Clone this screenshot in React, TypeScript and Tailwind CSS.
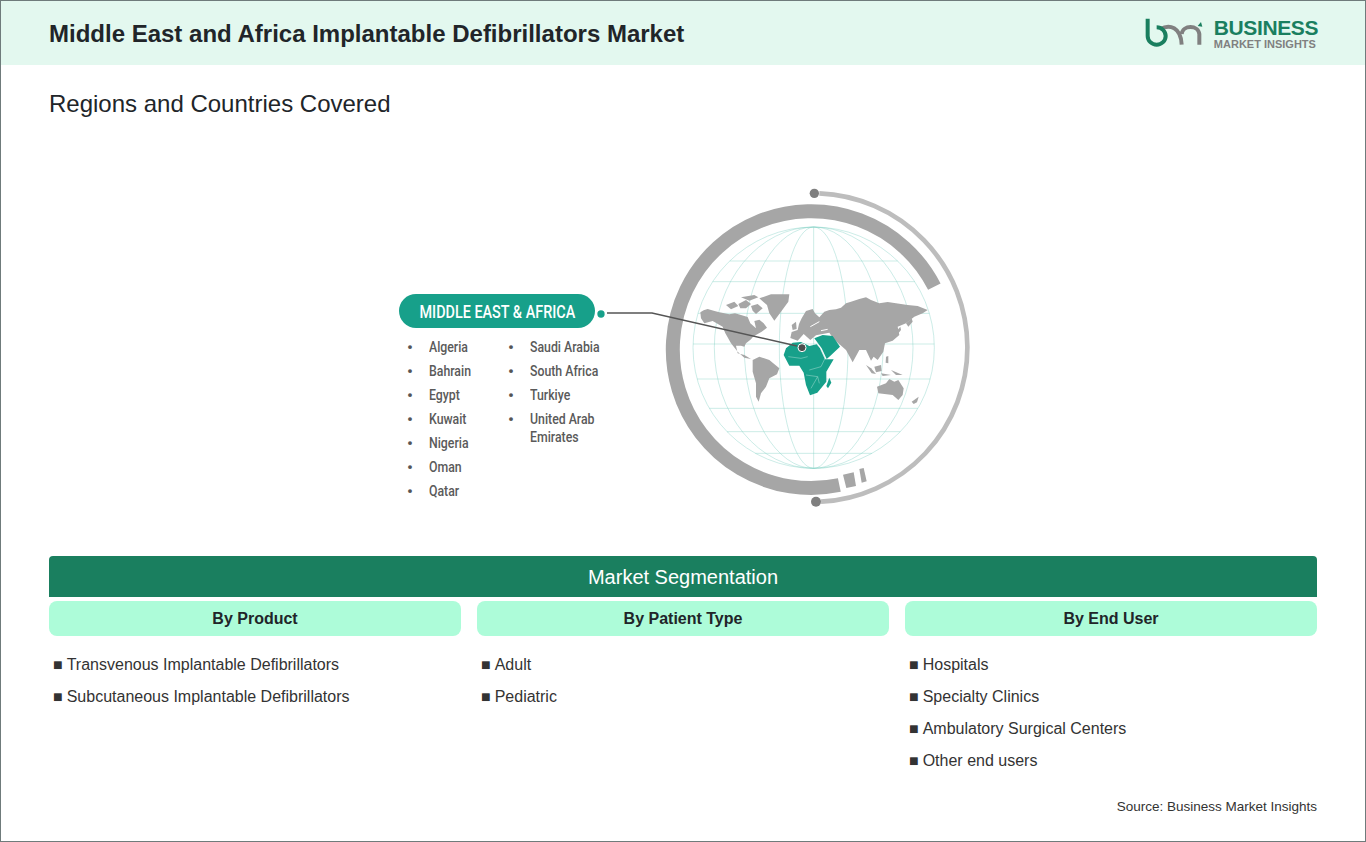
import React from 'react';

const meridians = [362, 298, 208, 103];
const parallels = [243, 305, 400, 492, 597, 685, 755, 820];
const leftCountries = ['Algeria', 'Bahrain', 'Egypt', 'Kuwait', 'Nigeria', 'Oman', 'Qatar'];
const rightCountries = ['Saudi Arabia', 'South Africa', 'Turkiye', 'United Arab\nEmirates'];

const segments = [
  { title: 'By Product', items: ['Transvenous Implantable Defibrillators', 'Subcutaneous Implantable Defibrillators'] },
  { title: 'By Patient Type', items: ['Adult', 'Pediatric'] },
  { title: 'By End User', items: ['Hospitals', 'Specialty Clinics', 'Ambulatory Surgical Centers', 'Other end users'] },
];

const greyLand = [
  // north america
  'M148,397 L158,391 L170,387 L188,392 L205,397 L235,403 L252,400 L270,405 L290,411 L298,430 L315,445 L310,423 L325,419 L338,430 L348,443 L332,455 L315,465 L306,470 L300,478 L285,490 L280,500 L270,497 L255,497 L260,520 L280,525 L300,537 L280,533 L260,515 L240,490 L223,460 L215,440 L185,423 L160,430 L150,415 Z',
  // arctic islands
  'M225,375 L250,365 L262,378 L240,388 Z',
  'M262,372 L285,360 L300,372 L285,385 L268,385 Z',
  'M270,352 L310,345 L322,352 L295,362 Z',
  'M300,378 L320,372 L335,385 L315,402 L305,392 Z',
  // greenland
  'M325,355 L360,343 L415,343 L412,365 L390,395 L370,422 L355,400 L348,375 Z',
  // south america
  'M305,540 L325,530 L355,540 L385,565 L378,583 L355,595 L345,620 L330,640 L323,665 L315,650 L315,610 L305,575 Z',
  // eurasia
  'M418,474 L422,456 L440,450 L444,432 L452,415 L465,393 L485,387 L492,400 L505,412 L520,395 L535,390 L555,388 L570,383 L585,370 L600,365 L625,357 L645,352 L660,360 L685,370 L710,366 L735,370 L770,375 L800,378 L830,390 L815,400 L790,410 L765,430 L740,440 L745,465 L725,482 L702,490 L697,515 L680,540 L668,530 L660,542 L645,510 L625,510 L605,547 L585,510 L568,495 L548,478 L535,458 L495,466 L478,480 L458,462 L440,482 Z',
  // uk, japan, kamchatka
  'M422,435 L435,425 L437,447 L425,450 Z',
  'M735,455 L748,440 L750,450 L738,465 Z',
  'M765,430 L782,415 L785,425 L772,440 Z',
  // philippines and indonesia
  'M705,530 L712,528 L712,550 L704,548 Z',
  'M645,555 L660,565 L675,582 L662,580 Z',
  'M670,560 L690,555 L692,573 L675,577 Z',
  'M720,570 L755,585 L735,585 Z',
  'M690,580 L720,585 L695,588 Z',
  // australia
  'M678,620 L705,610 L715,597 L730,605 L742,600 L758,625 L755,645 L742,660 L725,645 L682,640 Z',
  'M782,665 L803,650 L798,667 L788,672 Z',
];

const tealLand = [
  // africa
  'M398,525 L405,505 L425,488 L450,486 L475,498 L497,493 L507,505 L522,538 L548,538 L526,575 L526,605 L499,638 L477,646 L465,615 L458,578 L445,557 L415,557 Z',
  // arabia
  'M490,475 L515,465 L545,468 L567,500 L535,530 L527,537 L512,505 Z',
  // madagascar
  'M535,593 L541,608 L531,625 L526,618 Z',
];

const GlobeFigure = () => (
  <svg viewBox="0 0 990 990" className="w-[330px] h-[330px] overflow-visible shrink-0">
    <path d="M850,320 A415,415 0 1 0 565,915" fill="none" stroke="#a6a6a6" strokeWidth="42" />
    <path d="M586,924 L576,884 L608,877 L615,918 Z" fill="#a6a6a6" />
    <path d="M632,908 L625,867 L638,864 L647,904 Z" fill="#a6a6a6" />
    <path d="M505,40 A463,463 0 0 1 510,965" fill="none" stroke="#bdbdbd" strokeWidth="14" />
    <circle cx="490" cy="40" r="14" fill="#7f7f7f" />
    <circle cx="495" cy="965" r="15" fill="#7f7f7f" />

    <g fill="none" stroke="#7fcfc3" strokeWidth="1.2">
      {meridians.map((rx) => (
        <ellipse key={rx} cx="488" cy="503" rx={rx} ry="362" />
      ))}
      <line x1="488" y1="141" x2="488" y2="865" />
      {parallels.map((y) => {
        const half = Math.sqrt(362 * 362 - (y - 503) * (y - 503));
        return <line key={y} x1={488 - half} y1={y} x2={488 + half} y2={y} />;
      })}
    </g>

    <g fill="#a6a6a6">
      {greyLand.map((d) => (
        <path key={d} d={d} />
      ))}
    </g>
    <g fill="#17a08a">
      {tealLand.map((d) => (
        <path key={d} d={d} />
      ))}
    </g>
    {/* inland seas and borders */}
    <g fill="none" stroke="#ffffff" strokeWidth="3">
      <path d="M478,440 L505,425" />
      <path d="M510,452 L530,448" />
    </g>
    <g fill="none" stroke="#a8ddd2" strokeWidth="1.5">
      <path d="M510,510 L522,535 L510,560 L475,570" />
      <path d="M465,585 L500,590 L505,610" />
      <path d="M412,530 L450,535 L470,530" />
      <path d="M500,590 L480,625" />
    </g>

    <circle cx="453" cy="503" r="12" fill="#4d4d4d" stroke="#ffffff" strokeWidth="3" />
    <path d="M-132,399 L3,399 L438,498" fill="none" stroke="#555555" strokeWidth="4" />
    <circle cx="-150" cy="402" r="11" fill="#17a08a" />
  </svg>
);

const Logo = () => (
  <div className="flex items-center gap-[7px]">
    <svg viewBox="0 0 198 114" className="w-[66px] h-[38px]">
      <path d="M58,45 C85,30 120,38 122,92 M122,60 C125,32 172,32 175,60 L175,92" fill="none" stroke="#808080" strokeWidth="12" />
      <path d="M20,14 L20,66 A27,26 0 1 0 47,40" fill="none" stroke="#1a7f5f" strokeWidth="12" />
      <path d="M170,36 L180,24 L184,38 Z" fill="#1a7f5f" />
    </svg>
    <div className="flex flex-col pt-[1px] font-['Liberation_Sans',sans-serif] font-bold">
      <span className="text-[21px] leading-[21px] tracking-[-0.4px] text-[#1a7f5f]">BUSINESS</span>
      <span className="text-[11px] leading-[13px] text-[#808080]">MARKET INSIGHTS</span>
    </div>
  </div>
);

const CountryList = ({ names, width }: { names: string[]; width: string }) => (
  <ul className={`flex flex-col gap-[6px] ${width}`}>
    {names.map((name) => (
      <li key={name} className="flex leading-[18px]">
        <span className="w-[30px] shrink-0 pl-[8px] text-[17px] text-[#555555]">•</span>
        <span className="shrink-0 whitespace-pre origin-left scale-x-[0.82]">{name}</span>
      </li>
    ))}
  </ul>
);

export default function App() {
  return (
    <div className="w-[1366px] h-[842px] border border-[#6f7b7b] bg-white font-['Liberation_Sans',Arial,sans-serif] text-[#212529] overflow-hidden">
      <div className="h-[64px] bg-[#e3f8ef] flex items-center justify-between pl-[48px] pr-[47px]">
        <h1 className="pt-[2px] text-2xl font-bold">Middle East and Africa Implantable Defibrillators Market</h1>
        <Logo />
      </div>

      <h2 className="ml-[48px] mt-[25px] text-2xl leading-[28px]">Regions and Countries Covered</h2>

      <div className="mt-[62px] h-[376px] pl-[398px] flex">
        <div className="w-[252px] pt-[114px]">
          <div className="w-[196px] h-[34px] rounded-[17px] bg-[#17a08a] flex items-center justify-center text-white font-['Roboto',sans-serif] text-[18px] font-medium">
            <span className="whitespace-nowrap scale-x-[0.8]">MIDDLE EAST &amp; AFRICA</span>
          </div>
          <div className="mt-[10px] flex font-['Roboto',sans-serif] text-[15px] font-medium text-[#5a5a5a]">
            <CountryList names={leftCountries} width="w-[101px]" />
            <CountryList names={rightCountries} width="w-[110px]" />
          </div>
        </div>
        <GlobeFigure />
      </div>

      <div className="mx-[48px]">
        <div className="h-[41px] rounded-t-[4px] bg-[#1a7f5f] flex items-center justify-center text-xl text-white">
          Market Segmentation
        </div>
        <div className="mt-[4px] grid grid-cols-3 gap-4">
          {segments.map((segment) => (
            <div key={segment.title}>
              <div className="h-[35px] rounded-lg bg-[#adfcd9] flex items-center justify-center font-bold text-base">
                {segment.title}
              </div>
              <ul className="mt-[13px] flex flex-col pl-[4px]">
                {segment.items.map((item) => (
                  <li key={item} className="h-[32px] flex items-center text-base text-[#333333]">
                    <span className="mr-[4px] text-[16px]">■</span>
                    {item}
                  </li>
                ))}
              </ul>
            </div>
          ))}
        </div>
        <p className="mt-[20px] text-right text-[13.5px] text-[#333333]">Source: Business Market Insights</p>
      </div>
    </div>
  );
}
